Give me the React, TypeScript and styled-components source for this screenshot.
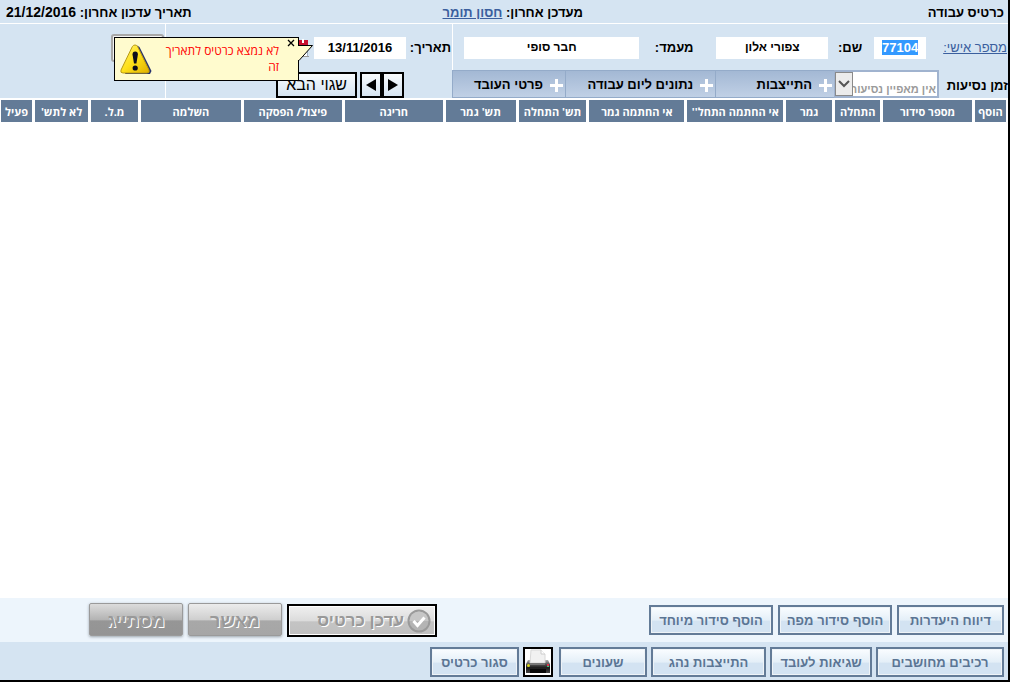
import React, { useEffect, useRef } from "react";
import styled, { createGlobalStyle, css } from "styled-components";

const GlobalStyle = createGlobalStyle`
  *, *::before, *::after { box-sizing: border-box; }
  body { margin: 0; background: #fff; }
  input, button, select { font: inherit; }
`;

const Page = styled.div`
  direction: rtl;
  display: flex;
  flex-direction: column;
  min-height: 100vh;
  border-right: 2px solid #000;
  border-bottom: 2px solid #000;
  font: bold 13px/16px "Liberation Sans", sans-serif;
  color: #000;
`;

const Header = styled.header`
  display: grid;
  grid-template-columns: 422fr 388fr 190fr;
  align-items: center;
  height: 24px;
  padding: 2px 4px 0 6px;
  background: #d5e4f2;
  border-bottom: 1px solid #fff;
  white-space: nowrap;
`;

const Title = styled.h1`
  margin: 0;
  font: inherit;
`;

const Updated = styled.span`
  justify-self: end;
`;

const UpdatedDate = styled.time`
  font-size: 14px;
`;

const Link = styled.a<{ $light?: boolean }>`
  color: #3b5f9e;
  font-weight: ${(p) => (p.$light ? 400 : 700)};
`;

const Panel = styled.section`
  display: grid;
  grid-template-columns: 556fr 287fr 165fr;
  height: 74px;
  background: #d5e4f2;
`;

const PanelColumn = styled.div`
  display: flex;
  flex-direction: column;
  min-width: 0;
`;

const DividedColumn = styled(PanelColumn)`
  border-left: 1px solid #fff;
`;

const FieldRow = styled.div<{ $divided?: boolean }>`
  display: flex;
  align-items: center;
  height: 46px;
  padding: 2px 1px 0 11px;
  white-space: nowrap;
  ${(p) => p.$divided && css`border-left: 1px solid #fff;`}
`;

const Label = styled.label<{ $width: number; $indent?: number }>`
  flex: none;
  width: ${(p) => p.$width}px;
  padding-right: ${(p) => p.$indent ?? 0}px;
`;

const Field = styled.input<{ $width: number; $small?: boolean }>`
  flex: 0 1 ${(p) => p.$width}px;
  min-width: 0;
  width: ${(p) => p.$width}px;
  height: 22px;
  padding: 0 0 2px;
  border: 0;
  outline: 0;
  background: #fff;
  font-size: ${(p) => (p.$small ? 12 : 13)}px;
  text-align: center;
  &::selection { background: #3399ff; color: #fff; }
`;

const TabsRow = styled.div`
  display: flex;
  height: 28px;
  white-space: nowrap;
`;

const TravelLabel = styled.label`
  flex: none;
  width: 69px;
  padding-top: 8px;
`;

const SelectBox = styled.div`
  position: relative;
  flex: none;
  width: 105px;
  border: 2px solid #a0b3cf;
  border-left-width: 1px;
  background: #fff;
`;

const Select = styled.select`
  appearance: none;
  width: 100%;
  height: 24px;
  padding: 9px 1px 0 16px;
  border: 0;
  background: transparent;
  color: #9a9a9a;
  font-size: 11px;
  line-height: 14px;
`;

const SelectArrow = styled.span`
  position: absolute;
  left: 0;
  top: 0;
  display: flex;
  align-items: center;
  justify-content: center;
  width: 18px;
  height: 24px;
  border: 1px solid #8a8a8a;
  background: #ececec;
  pointer-events: none;
`;

const Tab = styled.button<{ $grow: number }>`
  flex: ${(p) => p.$grow} 1 0;
  display: flex;
  align-items: center;
  gap: 7px;
  padding: 2px 2px 0 1px;
  border: 1px solid #94abc9;
  border-width: 1px 0 1px 1px;
  background: linear-gradient(#a3b8d4, #c0d0e5);
  color: #000;
`;

const DateAnchor = styled.div`
  position: relative;
  display: flex;
`;

const CalendarButton = styled.button`
  flex: none;
  margin: 0 5px 0 0;
  padding: 0;
  border: 0;
  background: none;
  line-height: 0;
`;

const Callout = styled.div`
  position: absolute;
  z-index: 1;
  top: 0;
  right: calc(100% + 15px);
  display: flex;
  align-items: flex-start;
  width: 185px;
  height: 44px;
  padding: 5px 19px 0 5px;
  border: 1px solid #000;
  background: #fffbce;
  color: #f00;
  font: 12px/16px "Open Sans", "Liberation Sans", sans-serif;
  white-space: normal;
`;

const CalloutText = styled.span`
  flex: 1;
`;

const CalloutClose = styled.button`
  position: absolute;
  top: 1px;
  right: 3px;
  padding: 0;
  border: 0;
  background: none;
  line-height: 0;
`;

const CalloutPointer = styled.svg`
  position: absolute;
  top: 6px;
  right: -16px;
`;

const NavRow = styled.div`
  display: flex;
  gap: 3px;
  padding: 2px 48px 0 0;
`;

const NavPair = styled.div`
  display: flex;
`;

const NavButton = styled.button<{ $wide?: boolean }>`
  display: flex;
  align-items: center;
  justify-content: center;
  width: ${(p) => (p.$wide ? 81 : 22)}px;
  height: 26px;
  padding: 0;
  border: 2px solid #000;
  background: linear-gradient(#f8fbfd, #d6e4f1);
  color: #000;
  font-size: 16px;
  font-weight: 400;
  white-space: nowrap;
`;

const BlankButton = styled.button`
  width: 53px;
  height: 28px;
  margin: 10px 1px 0 0;
  border: 2px solid #a8a8a8;
  border-radius: 3px;
  background: #f4f4f4;
`;

const Table = styled.table`
  width: calc(100% - 2px);
  margin: 2px 2px 0 0;
  border-spacing: 0;
  table-layout: fixed;
`;

const Th = styled.th`
  height: 22px;
  padding: 1px 0 0;
  border-left: 3px solid #fff;
  background: #637b97;
  color: #fff;
  font: bold 11px/16px "Open Sans", "Liberation Sans", sans-serif;
  white-space: nowrap;
  &:last-child { border-left-width: 1px; }
`;

const Main = styled.main`
  flex: 1;
`;

const ActionBar = styled.div<{ $dark?: boolean }>`
  display: flex;
  align-items: flex-start;
  gap: ${(p) => (p.$dark ? 4 : 5)}px;
  height: ${(p) => (p.$dark ? 38 : 44)}px;
  padding: ${(p) => (p.$dark ? 5 : 7)}px 4px 0 0;
  background: ${(p) => (p.$dark ? "#d5e4f2" : "#edf5fc")};
`;

const ActionButton = styled.button<{ $width: number }>`
  flex: none;
  width: ${(p) => p.$width}px;
  height: 30px;
  padding: 2px 0 0;
  border: 2px solid #637b97;
  background: linear-gradient(#fafdff, #e4eff8 50%, #d3e3f2 55%, #d3e3f2);
  box-shadow: inset 0 0 0 1px #eef3f7;
  color: #5b7594;
  white-space: nowrap;
`;

const PrintButton = styled.button`
  flex: none;
  width: 30px;
  height: 30px;
  margin-right: 2px;
  padding: 0;
  border: 2px solid #000;
  background: #fff;
  line-height: 0;
`;

const ApprovalGroup = styled.div`
  display: flex;
  align-items: flex-start;
  gap: 5px;
  margin: -2px auto 0 89px;
`;

const ApprovalButton = styled.button<{ $dim?: boolean }>`
  width: 94px;
  height: 33px;
  padding: 2px 0 0;
  border: 1px solid #9a9a9a;
  border-radius: 2px;
  background: ${(p) =>
    p.$dim
      ? "linear-gradient(#dcdcdc, #b4b4b4 50%, #969696 55%, #949494)"
      : "linear-gradient(#ececec, #cfcfcf 50%, #a8a8a8 55%, #a6a6a6)"};
  box-shadow: 0 1px 3px #9aa3ab;
  color: #999;
  font-size: 18px;
  text-shadow: 1px 1px 0 #fff;
`;

const UpdateButton = styled.button`
  display: flex;
  align-items: center;
  gap: 3px;
  width: 150px;
  height: 33px;
  margin-top: 1px;
  padding: 0 4px 0 3px;
  border: 2px solid #000;
  background: linear-gradient(#f0f0f0, #dcdcdc 50%, #c4c4c4 55%, #c0c0c0);
  box-shadow: inset 0 0 0 1px #fff;
  color: #999;
  font-size: 17px;
  text-shadow: 1px 1px 0 #fff;
`;

const PlusIcon = () => (
  <svg width="13" height="13" viewBox="0 0 13 13" aria-hidden="true">
    <path d="M5 0h3v5h5v3H8v5H5V8H0V5h5z" fill="#fff" />
  </svg>
);

const WarningIcon = () => (
  <svg width="32" height="32" viewBox="0 0 32 32" aria-hidden="true">
    <defs>
      <linearGradient id="warn" x1="0" y1="0" x2="1" y2="1">
        <stop offset="0" stopColor="#fff27a" />
        <stop offset="0.5" stopColor="#ffe11a" />
        <stop offset="1" stopColor="#e0b000" />
      </linearGradient>
    </defs>
    <path d="M17 2.500 19.500 4 31.500 28 30 31H5z" fill="#26306e" />
    <path d="M15 2q1.800 0 2.700 1.700L29 27q1 3-2 3H3q-3 0-2-3L12.300 3.700Q13.200 2 15 2z" fill="url(#warn)" stroke="#b99a12" />
    <path d="M12.500 11.500q0-3 2.700-3t2.700 3l-1.500 9h-2.400z" fill="#0c0c1c" />
    <circle cx="15.200" cy="25" r="2.600" fill="#0c0c1c" />
  </svg>
);

const CalendarIcon = () => (
  <svg width="20" height="20" viewBox="0 0 20 20" aria-hidden="true">
    <rect x="0.500" y="2.500" width="18" height="16" fill="#fff" stroke="#9fb0c4" />
    <rect x="1" y="2" width="18" height="6" fill="#c8102e" />
    <path d="M13 1h2v4h-2z" fill="#fff" />
    <path d="M2 18.500h18" stroke="#9a9a9a" />
  </svg>
);

const CheckIcon = () => (
  <svg width="24" height="24" viewBox="0 0 24 24" aria-hidden="true">
    <circle cx="12" cy="12" r="10.500" fill="#b4b4b4" stroke="#9a9a9a" strokeWidth="2" />
    <path d="M2.500 12a9.500 9.500 0 0 1 19 0z" fill="#c6c6c6" />
    <path d="m6.500 12 4 4.500 7-8" fill="none" stroke="#fff" strokeWidth="3" />
  </svg>
);

const PrinterIcon = () => (
  <svg width="26" height="26" viewBox="0 0 26 26" aria-hidden="true">
    <defs>
      <linearGradient id="body" x1="0" y1="0" x2="0" y2="1">
        <stop offset="0" stopColor="#b0b0b0" />
        <stop offset="0.300" stopColor="#5a5a5a" />
        <stop offset="0.600" stopColor="#1a1a1a" />
        <stop offset="1" stopColor="#444" />
      </linearGradient>
    </defs>
    <path d="M3 11h20l2 4v9H1v-9z" fill="url(#body)" />
    <path d="M6 1h10l4 4v9H5z" fill="#f1f1f1" stroke="#d8d8d8" />
    <path d="M16 1v4h4" fill="#fff" stroke="#ccc" />
    <path d="M5 14h15v2H5z" fill="#777" />
    <path d="M5 20h16v4H5z" fill="#080808" />
    <circle cx="3.500" cy="16.500" r="1.500" fill="#d8d61c" />
    <path d="M22 15h2v2h-2z" fill="#e0304a" />
    <path d="M22 17h2v1h-2z" fill="#2ec27e" />
  </svg>
);

const columns: [string, number][] = [
  ["הוסף", 34],
  ["מספר סידור", 92],
  ["התחלה", 48],
  ["גמר", 49],
  ["אי החתמה התחל''", 99],
  ["אי החתמה גמר", 98],
  ["תש' התחלה", 71],
  ["תש' גמר", 73],
  ["חריגה", 101],
  ["פיצול/ הפסקה", 101],
  ["השלמה", 103],
  ["מ.ל.", 50],
  ["לא לתש'", 56],
  ["פעיל", 32],
];
const totalWidth = columns.reduce((sum, [, width]) => sum + width, 0);

const cardActions: [string, number][] = [
  ["דיווח היעדרות", 107],
  ["הוסף סידור מפה", 114],
  ["הוסף סידור מיוחד", 124],
];

const employeeActions: [string, number][] = [
  ["רכיבים מחושבים", 128],
  ["שגיאות לעובד", 102],
  ["התייצבות נהג", 115],
  ["שעונים", 88],
];

export default function App() {
  const employeeId = useRef<HTMLInputElement>(null);

  useEffect(() => {
    employeeId.current?.focus();
    employeeId.current?.select();
  }, []);

  return (
    <Page lang="he">
      <GlobalStyle />
      <Header>
        <Title>כרטיס עבודה</Title>
        <span>
          מעדכן אחרון: <Link href="#updater">חסון תומר</Link>
        </span>
        <Updated>
          תאריך עדכון אחרון: <UpdatedDate>21/12/2016</UpdatedDate>
        </Updated>
      </Header>

      <Panel>
        <PanelColumn>
          <FieldRow $divided>
            <Label htmlFor="employee-id" $width={81}>
              <Link href="#employee" $light>מספר אישי:</Link>
            </Label>
            <Field id="employee-id" ref={employeeId} $width={52} defaultValue="77104" />
            <Label htmlFor="name" $width={46} $indent={12}>שם:</Label>
            <Field id="name" $width={112} $small defaultValue="צפורי אלון" />
            <Label htmlFor="status" $width={77} $indent={23}>מעמד:</Label>
            <Field id="status" $width={176} $small defaultValue="חבר סופי" />
          </FieldRow>
          <TabsRow>
            <TravelLabel htmlFor="travel">זמן נסיעות</TravelLabel>
            <SelectBox>
              <Select id="travel">
                <option>אין מאפיין נסיעות</option>
              </Select>
              <SelectArrow>
                <svg width="12" height="8" viewBox="0 0 12 8" aria-hidden="true">
                  <path d="m1 1 5 5 5-5" fill="none" stroke="#555" strokeWidth="2" />
                </svg>
              </SelectArrow>
            </SelectBox>
            <Tab $grow={118}><PlusIcon />התייצבות</Tab>
            <Tab $grow={150}><PlusIcon />נתונים ליום עבודה</Tab>
            <Tab $grow={112}><PlusIcon />פרטי העובד</Tab>
          </TabsRow>
        </PanelColumn>

        <DividedColumn>
          <FieldRow>
            <Label htmlFor="date" $width={45}>תאריך:</Label>
            <DateAnchor>
              <Field id="date" $width={92} defaultValue="13/11/2016" />
              <Callout role="alert">
                <CalloutText>לא נמצא כרטיס לתאריך זה</CalloutText>
                <WarningIcon />
                <CalloutClose aria-label="סגור">
                  <svg width="8" height="8" viewBox="0 0 8 8" aria-hidden="true">
                    <path d="m1 1 6 6m0-6-6 6" stroke="#000" strokeWidth="1.300" />
                  </svg>
                </CalloutClose>
                <CalloutPointer width="16" height="18" viewBox="0 0 16 18" aria-hidden="true">
                  <path d="M0 1.500h14.500L1 16.500" fill="#fffbce" stroke="#000" />
                  <path d="M0.500 2v14" stroke="#fffbce" />
                </CalloutPointer>
              </Callout>
            </DateAnchor>
            <CalendarButton aria-label="בחר תאריך"><CalendarIcon /></CalendarButton>
          </FieldRow>
          <NavRow>
            <NavPair>
              <NavButton aria-label="הבא">
                <svg width="12" height="14" viewBox="0 0 12 14" aria-hidden="true"><path d="M1 1v12l10-6z" /></svg>
              </NavButton>
              <NavButton aria-label="הקודם">
                <svg width="12" height="14" viewBox="0 0 12 14" aria-hidden="true"><path d="M11 1v12L1 7z" /></svg>
              </NavButton>
            </NavPair>
            <NavButton $wide>שגוי הבא</NavButton>
          </NavRow>
        </DividedColumn>

        <PanelColumn>
          <BlankButton aria-label="רענן" />
        </PanelColumn>
      </Panel>

      <Main>
        <Table>
          <colgroup>
            {columns.map(([name, width]) => (
              <col key={name} style={{ width: `${(width / totalWidth) * 100}%` }} />
            ))}
          </colgroup>
          <thead>
            <tr>
              {columns.map(([name]) => (
                <Th key={name} scope="col">{name}</Th>
              ))}
            </tr>
          </thead>
        </Table>
      </Main>

      <ActionBar>
        {cardActions.map(([name, width]) => (
          <ActionButton key={name} $width={width}>{name}</ActionButton>
        ))}
        <ApprovalGroup>
          <UpdateButton><CheckIcon />עדכן כרטיס</UpdateButton>
          <ApprovalButton>מאשר</ApprovalButton>
          <ApprovalButton $dim>מסתייג</ApprovalButton>
        </ApprovalGroup>
      </ActionBar>
      <ActionBar $dark>
        {employeeActions.map(([name, width]) => (
          <ActionButton key={name} $width={width}>{name}</ActionButton>
        ))}
        <PrintButton aria-label="הדפס"><PrinterIcon /></PrintButton>
        <ActionButton $width={89}>סגור כרטיס</ActionButton>
      </ActionBar>
    </Page>
  );
}
